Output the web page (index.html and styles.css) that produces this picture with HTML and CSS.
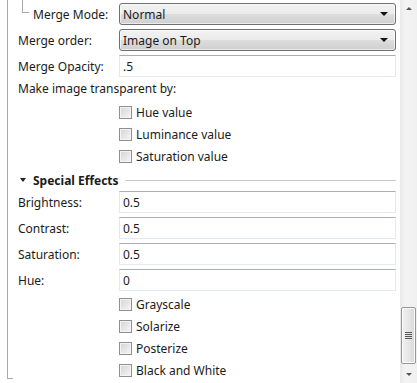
FILE: index.html
```html
<!DOCTYPE html>
<html lang="en">
<head>
    <meta charset="UTF-8">
    <title>Image Properties</title>
    <link rel="stylesheet" href="styles.css">
</head>
<body>
    <div class="window">
        <div class="panel">
            <div class="tree-line"></div>

            <!-- merge settings -->
            <div class="row sub">
                <span class="elbow"></span>
                <label class="label">Merge Mode:</label>
                <div class="combo">Normal<span class="arrow"></span></div>
            </div>
            <div class="row">
                <label class="label">Merge order:</label>
                <div class="combo">Image on Top<span class="arrow"></span></div>
            </div>
            <div class="row">
                <label class="label">Merge Opacity:</label>
                <div class="field">.5</div>
            </div>
            <div class="note">Make image transparent by:</div>
            <div class="checks">
                <div class="check"><span class="box"></span>Hue value</div>
                <div class="check"><span class="box"></span>Luminance value</div>
                <div class="check"><span class="box"></span>Saturation value</div>
            </div>

            <!-- special effects -->
            <div class="group">
                <span class="caret"></span>
                <span class="group-title">Special Effects</span>
                <span class="rule"></span>
            </div>
            <div class="row">
                <label class="label">Brightness:</label>
                <div class="field">0.5</div>
            </div>
            <div class="row">
                <label class="label">Contrast:</label>
                <div class="field">0.5</div>
            </div>
            <div class="row">
                <label class="label">Saturation:</label>
                <div class="field">0.5</div>
            </div>
            <div class="row">
                <label class="label">Hue:</label>
                <div class="field">0</div>
            </div>
            <div class="checks lower">
                <div class="check"><span class="box"></span>Grayscale</div>
                <div class="check"><span class="box"></span>Solarize</div>
                <div class="check"><span class="box"></span>Posterize</div>
                <div class="check"><span class="box"></span>Black and White</div>
            </div>
        </div>

        <div class="scrollbar">
            <span class="btn up"></span>
            <div class="track">
                <div class="thumb"><span class="grip"></span></div>
            </div>
            <span class="btn down"></span>
        </div>
    </div>
</body>
</html>
```

FILE: styles.css
```css
* {
    margin: 0;
    padding: 0;
    box-sizing: border-box;
}

body {
    width: 417px;
    height: 383px;
    overflow: hidden;
    background: #fff;
    font-family: "Noto Sans", "Liberation Sans", sans-serif;
    font-size: 12px;
    color: #1b1b1b;
}

.window {
    display: flex;
    height: 383px;
}

.panel {
    flex: 1;
    position: relative;
    padding: 3px 4px 0 18px;
}

/* vertical tree line on the left */
.tree-line {
    position: absolute;
    left: 7px;
    top: 0;
    width: 6px;
    height: 379px;
    border-left: 1px solid #a8a8a8;
    border-bottom: 1px solid #a8a8a8;
}

.row {
    display: flex;
    align-items: center;
    height: 22px;
    margin-bottom: 4px;
}

.label {
    width: 101px;
    flex: none;
}

.sub .label {
    width: 86px;
}

.elbow {
    width: 7px;
    height: 14px;
    margin: -17px 4px 0 4px;
    border-left: 1px solid #a8a8a8;
    border-bottom: 1px solid #a8a8a8;
    flex: none;
}

.combo {
    flex: 1;
    height: 22px;
    position: relative;
    border: 1px solid #707070;
    border-radius: 3px;
    padding: 2px 0 0 3px;
    background: linear-gradient(#f2f2f2 0%, #ebebeb 48%, #dddddd 52%, #cfcfcf 100%);
    box-shadow: inset 0 0 0 1px rgba(255, 255, 255, 0.6);
}

.arrow {
    position: absolute;
    right: 7px;
    top: 8px;
    border-left: 4px solid transparent;
    border-right: 4px solid transparent;
    border-top: 4px solid #111;
}

.field {
    flex: 1;
    height: 22px;
    border: 1px solid #e3e9ef;
    border-top-color: #abadb3;
    padding: 2px 0 0 3px;
    background: #fff;
}

.note {
    height: 20px;
    margin-top: -1px;
}

.checks {
    padding-left: 101px;
    margin-top: 1px;
}

.checks.lower {
    margin-top: -2px;
}

.check {
    display: flex;
    align-items: center;
    height: 22px;
}

.box {
    width: 13px;
    height: 13px;
    margin-right: 4px;
    border: 1px solid #8e8f8f;
    background: linear-gradient(135deg, #d4d4d4, #f6f6f6);
    box-shadow: inset 0 0 0 1px #f4f4f4;
}

.group {
    display: flex;
    align-items: center;
    height: 24px;
    padding-top: 2px;
}

.caret {
    margin: 0 7px 0 2px;
    border-left: 3px solid transparent;
    border-right: 3px solid transparent;
    border-top: 4px solid #222;
}

.group-title {
    font-weight: bold;
}

.rule {
    flex: 1;
    margin-left: 6px;
    border-top: 1px solid #c8c8c8;
}

/* scrollbar on the right */
.scrollbar {
    width: 17px;
    display: flex;
    flex-direction: column;
    background: linear-gradient(90deg, #e8e8e8, #f3f3f3 30%, #f0f0f0);
}

.btn {
    height: 17px;
    display: flex;
    justify-content: center;
    align-items: center;
}

.btn::after {
    content: "";
    border-left: 3px solid transparent;
    border-right: 3px solid transparent;
}

.up::after {
    border-bottom: 3px solid #555;
}

.down::after {
    border-top: 3px solid #555;
}

.track {
    flex: 1;
    display: flex;
    flex-direction: column;
    justify-content: flex-end;
    padding: 0 1px 2px 1px;
}

.thumb {
    height: 57px;
    border: 1px solid #979797;
    border-radius: 2px;
    background: linear-gradient(90deg, #f1f1f1, #e6e6e6 50%, #d8d8d8);
    box-shadow: inset 0 0 0 1px #fafafa;
    display: flex;
    justify-content: center;
    align-items: center;
}

.grip {
    width: 7px;
    height: 7px;
    background: repeating-linear-gradient(#555 0 1px, transparent 1px 2px);
}
```
